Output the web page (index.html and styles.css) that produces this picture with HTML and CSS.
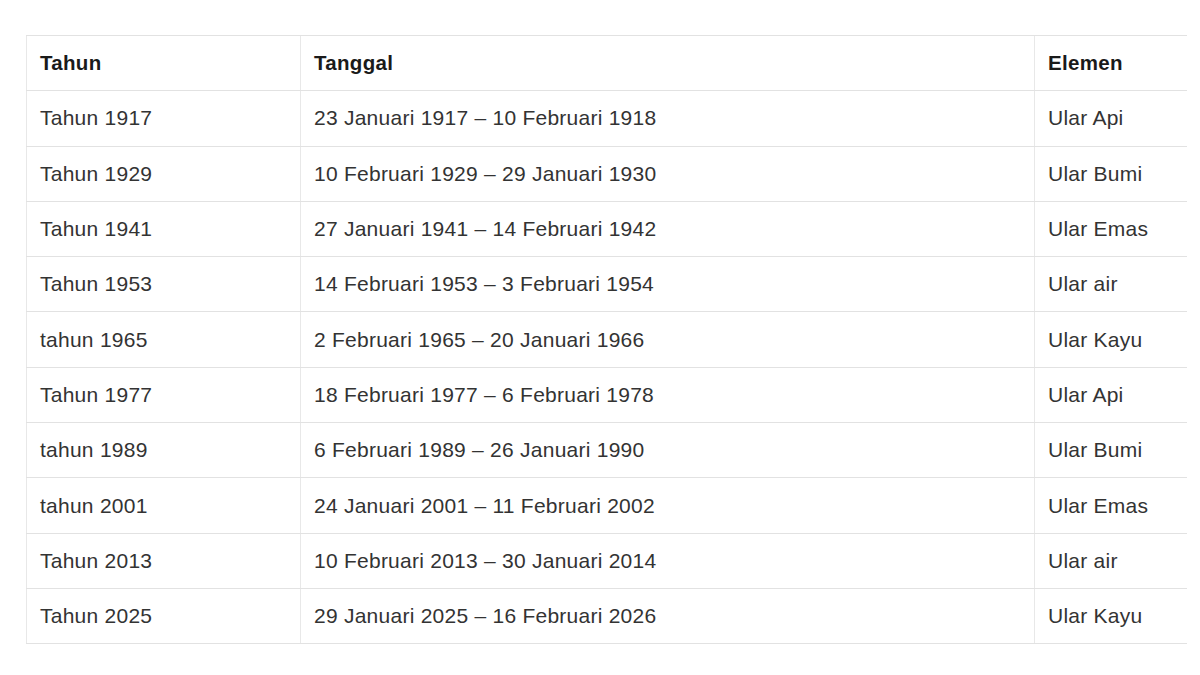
FILE: index.html
```html
<!DOCTYPE html>
<html lang="id">
<head>
<meta charset="utf-8">
<title>Tahun Ular</title>
<link rel="stylesheet" href="styles.css">
</head>
<body>
<div class="page">
<table class="shio">
<colgroup>
<col class="c1"><col class="c2"><col class="c3">
</colgroup>
<thead>
<tr><th>Tahun</th><th>Tanggal</th><th>Elemen</th></tr>
</thead>
<tbody>
<tr><td>Tahun 1917</td><td>23 Januari 1917 – 10 Februari 1918</td><td>Ular Api</td></tr>
<tr><td>Tahun 1929</td><td>10 Februari 1929 – 29 Januari 1930</td><td>Ular Bumi</td></tr>
<tr><td>Tahun 1941</td><td>27 Januari 1941 – 14 Februari 1942</td><td>Ular Emas</td></tr>
<tr><td>Tahun 1953</td><td>14 Februari 1953 – 3 Februari 1954</td><td>Ular air</td></tr>
<tr><td>tahun 1965</td><td>2 Februari 1965 – 20 Januari 1966</td><td>Ular Kayu</td></tr>
<tr><td>Tahun 1977</td><td>18 Februari 1977 – 6 Februari 1978</td><td>Ular Api</td></tr>
<tr><td>tahun 1989</td><td>6 Februari 1989 – 26 Januari 1990</td><td>Ular Bumi</td></tr>
<tr><td>tahun 2001</td><td>24 Januari 2001 – 11 Februari 2002</td><td>Ular Emas</td></tr>
<tr><td>Tahun 2013</td><td>10 Februari 2013 – 30 Januari 2014</td><td>Ular air</td></tr>
<tr><td>Tahun 2025</td><td>29 Januari 2025 – 16 Februari 2026</td><td>Ular Kayu</td></tr>
</tbody>
</table>
</div>
</body>
</html>
```
FILE: styles.css
```css
html, body {
  margin: 0;
  padding: 0;
  background: #fff;
}
.page {
  padding: 35px 0 0 26px;
}
.shio {
  border-collapse: collapse;
  table-layout: fixed;
  width: 1160px;
  font-family: "Liberation Sans", Arial, sans-serif;
  font-size: 21px;
  letter-spacing: 0.25px;
  color: #333;
}
.c1 { width: 274px; }
.c2 { width: 734px; }
.c3 { width: 152px; }
.shio th,
.shio td {
  height: 55.3px;
  padding: 0 0 0 13px;
  text-align: left;
  vertical-align: middle;
  border-top: 1px solid #e2e2e2;
  border-bottom: 1px solid #e2e2e2;
  border-left: 1px solid #e8e8e8;
  white-space: nowrap;
  box-sizing: border-box;
}
.shio th {
  font-weight: bold;
  color: #1a1a1a;
  font-size: 20.5px;
  letter-spacing: 0.3px;
}
```
